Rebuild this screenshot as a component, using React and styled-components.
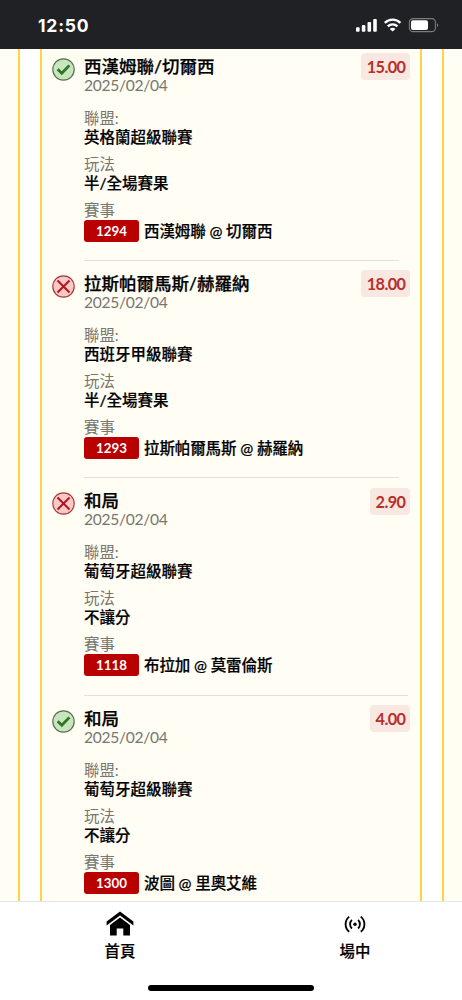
import React from 'react';
import styled, { createGlobalStyle } from 'styled-components';

const GlobalStyle = createGlobalStyle`
  * {
    box-sizing: border-box;
  }
  body {
    margin: 0;
    background: #fff;
    font-family: Lato, 'Noto Sans CJK TC', sans-serif;
  }
`;

const Screen = styled.div`
  width: 462px;
  height: 1000px;
  display: flex;
  flex-direction: column;
  overflow: hidden;
`;

//status bar
const StatusBar = styled.header`
  flex: 0 0 49px;
  display: flex;
  justify-content: space-between;
  padding: 16px 22px 0 38px;
  background: #202124;
`;

const Clock = styled.div`
  font-family: Inter, sans-serif;
  font-size: 17.5px;
  font-weight: 700;
  line-height: 20px;
  letter-spacing: 0.8px;
  color: #fff;
`;

const StatusIcons = styled.svg`
  width: 84px;
  height: 18px;
`;

//striped frame around the list
const Content = styled.main`
  flex: 1;
  min-height: 0;
  padding: 0 18px;
  background: #fffdf4;
  overflow: hidden;
`;

const OuterFrame = styled.div`
  height: 100%;
  padding: 0 20px;
  border: solid #ffd43f;
  border-width: 0 2px;
  background: #fff;
`;

const InnerFrame = styled.div`
  height: 100%;
  padding: 0 10px;
  border: solid #ffd43f;
  border-width: 0 2px;
  background: #fffdf4;
  overflow: hidden;
`;

const List = styled.div`
  margin-top: -5.4px;
`;

//one bet
const Item = styled.section`
  display: flex;
  height: 217.4px;
`;

const IconCell = styled.div`
  flex: 0 0 32px;
  padding-top: 14px;
`;

const ResultIcon = styled.svg`
  display: block;
  width: 23px;
  height: 23px;
`;

const Details = styled.div`
  flex: 1;
  padding-top: 13px;
  border-bottom: 1px solid #e4e1dc;
  margin-right: -38px;
`;

const Title = styled.div`
  font-size: 17.5px;
  font-weight: 500;
  line-height: 20px;
  white-space: nowrap;
  color: #000;
  -webkit-text-stroke: 0.25px #000;
`;

const DateText = styled.div`
  margin-top: -1px;
  font-size: 15.6px;
  line-height: 18px;
  letter-spacing: -0.3px;
  color: #77766f;
`;

const Fields = styled.div`
  display: flex;
  flex-direction: column;
  gap: 7px;
  margin-top: 15px;
`;

const Label = styled.div`
  font-size: 15.4px;
  line-height: 19px;
  color: #77766f;
`;

const Value = styled.div`
  margin-top: -1px;
  padding-bottom: 1px;
  font-size: 15.5px;
  font-weight: 500;
  line-height: 20px;
  color: #000;
  -webkit-text-stroke: 0.2px #000;
`;

const Match = styled.div`
  display: flex;
  align-items: center;
  gap: 5px;
  font-size: 15.5px;
  font-weight: 500;
  line-height: 22px;
  white-space: nowrap;
  color: #000;
`;

const MatchName = styled.span`
  letter-spacing: -0.1px;
  -webkit-text-stroke: 0.2px #000;
`;

const Code = styled.span`
  width: 55px;
  height: 22px;
  border-radius: 3px;
  background: #b90000;
  color: #fff;
  font-size: 13.3px;
  font-weight: 700;
  text-align: center;
`;

const Odds = styled.div`
  height: 27px;
  margin-top: 9.4px;
  padding: 0 4.6px 0 5.4px;
  border-radius: 4px;
  background: #f9e8e1;
  color: #b92f2b;
  font-size: 16.3px;
  font-weight: 700;
  line-height: 28px;
  letter-spacing: -0.6px;
`;

//bottom tabs
const TabBar = styled.nav`
  position: relative;
  flex: 0 0 99px;
  display: grid;
  grid-template-columns: 240px 1fr;
  border-top: 1px solid #e6e6e6;
  background: #fff;
`;

const Tab = styled.div`
  display: flex;
  flex-direction: column;
  align-items: center;
  padding: 8px 0 0 ${(props) => props.$shift || 0}px;
  font-size: 15.4px;
  font-weight: 500;
  line-height: 22px;
  color: #000;
  -webkit-text-stroke: 0.2px #000;
`;

const TabIcon = styled.svg`
  width: 28px;
  height: 26px;
  margin-bottom: 4px;
`;

const HomeIndicator = styled.div`
  position: absolute;
  left: 148px;
  bottom: 9px;
  width: 166px;
  height: 6px;
  border-radius: 3px;
  background: #000;
`;

const bets = [
  {
    win: true,
    title: '西漢姆聯/切爾西',
    league: '英格蘭超級聯賽',
    play: '半/全場賽果',
    code: '1294',
    match: '西漢姆聯 @ 切爾西',
    odds: '15.00',
  },
  {
    win: false,
    title: '拉斯帕爾馬斯/赫羅納',
    league: '西班牙甲級聯賽',
    play: '半/全場賽果',
    code: '1293',
    match: '拉斯帕爾馬斯 @ 赫羅納',
    odds: '18.00',
  },
  {
    win: false,
    title: '和局',
    league: '葡萄牙超級聯賽',
    play: '不讓分',
    code: '1118',
    match: '布拉加 @ 莫雷倫斯',
    odds: '2.90',
  },
  {
    win: true,
    title: '和局',
    league: '葡萄牙超級聯賽',
    play: '不讓分',
    code: '1300',
    match: '波圖 @ 里奧艾維',
    odds: '4.00',
  },
];

const WinIcon = () => (
  <ResultIcon viewBox="0 0 23 23">
    <circle cx="11.5" cy="11.5" r="10.7" fill="#c9e5be" stroke="#57724f" strokeWidth="1.2" />
    <path d="M5.7 11.3 9.8 15.3 17.4 7.4" fill="none" stroke="#2f7428" strokeWidth="2.8" />
  </ResultIcon>
);

const LoseIcon = () => (
  <ResultIcon viewBox="0 0 23 23">
    <circle cx="11.5" cy="11.5" r="10.7" fill="#fac9c5" stroke="#a63b3d" strokeWidth="1.2" />
    <path d="M5.5 5.5 17.5 17.5M17.5 5.5 5.5 17.5" fill="none" stroke="#ae1724" strokeWidth="2" />
  </ResultIcon>
);

const Bet = ({ bet }) => (
  <Item>
    <IconCell>{bet.win ? <WinIcon /> : <LoseIcon />}</IconCell>
    <Details>
      <Title>{bet.title}</Title>
      <DateText>2025/02/04</DateText>
      <Fields>
        <div>
          <Label>聯盟:</Label>
          <Value>{bet.league}</Value>
        </div>
        <div>
          <Label>玩法</Label>
          <Value>{bet.play}</Value>
        </div>
        <div>
          <Label>賽事</Label>
          <Match>
            <Code>{bet.code}</Code>
            <MatchName>{bet.match}</MatchName>
          </Match>
        </div>
      </Fields>
    </Details>
    <Odds>{bet.odds}</Odds>
  </Item>
);

const App = () => (
  <>
    <GlobalStyle />
    <Screen>
      <StatusBar>
        <Clock>12:50</Clock>
        <StatusIcons viewBox="0 0 84 18">
          <g fill="#fff">
            <rect x="0" y="11.2" width="3.6" height="4.6" rx="1" />
            <rect x="5.8" y="8.9" width="3.6" height="6.9" rx="1" />
            <rect x="11.5" y="6" width="3.6" height="9.8" rx="1" />
            <rect x="17.2" y="3" width="3.6" height="12.8" rx="1" />
            <path d="M36.6 11.8c1.2 0 2.1.4 2.8 1.1L36.6 15.6 33.8 12.9c.7-.7 1.6-1.1 2.8-1.1z" />
          </g>
          <g fill="none" stroke="#fff" strokeWidth="2.4">
            <path d="M28.8 6.8a11.1 11.1 0 0 1 15.6 0" />
            <path d="M31.8 10.4a6.8 6.8 0 0 1 9.6 0" />
          </g>
          <rect x="53.4" y="2.6" width="26" height="13" rx="3.7" fill="none" stroke="#7b7c7e" strokeWidth="1.1" />
          <rect x="55" y="4.3" width="17" height="9.6" rx="2" fill="#fff" />
          <path d="M81 7.2c1.8.7 1.8 3.2 0 3.9z" fill="#7b7c7e" />
        </StatusIcons>
      </StatusBar>

      <Content>
        <OuterFrame>
          <InnerFrame>
            <List>
              {bets.map((bet) => (
                <Bet key={bet.code} bet={bet} />
              ))}
            </List>
          </InnerFrame>
        </OuterFrame>
      </Content>

      <TabBar>
        <Tab>
          <TabIcon viewBox="0 0 28 26">
            <path d="M.6 11.6 14 1.4l13.4 10.2v4L14 5.4.6 15.6z" />
            <path d="M4 14.9 14 7.4l10 7.5V25.6h-6.7v-7h-6.6v7H4z" />
          </TabIcon>
          首頁
        </Tab>
        <Tab $shift={8}>
          <TabIcon viewBox="0 0 28 26">
            <circle cx="14" cy="14.2" r="1.7" />
            <g fill="none" stroke="#000" strokeWidth="1.8">
              <path d="M10.9 9.9a6 6 0 0 0 0 8.6M17.1 9.9a6 6 0 0 1 0 8.6" />
              <path d="M8.2 6.6a9.8 9.8 0 0 0 0 15.2M19.8 6.6a9.8 9.8 0 0 1 0 15.2" />
            </g>
          </TabIcon>
          場中
        </Tab>
        <HomeIndicator />
      </TabBar>
    </Screen>
  </>
);

export default App;
